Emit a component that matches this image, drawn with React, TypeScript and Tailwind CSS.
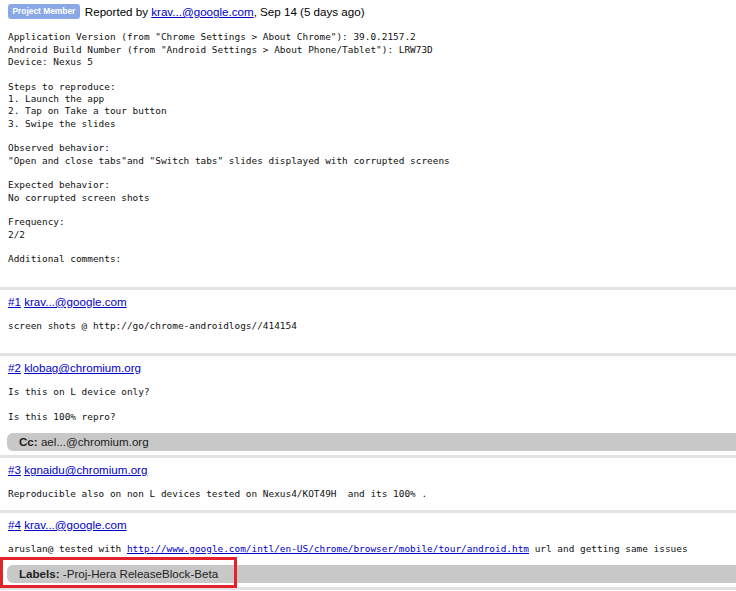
import type { ReactNode } from 'react';

const mono = "font-['DejaVu_Sans_Mono',monospace] text-[9.42px] leading-[12.33px] text-[#111] whitespace-pre m-0";

interface CommentProps {
  num: number;
  author: string;
  children: ReactNode;
  update?: ReactNode;
  highlight?: boolean;
}

function Comment({ num, author, children, update, highlight }: CommentProps) {
  return (
    <div className={`relative border-t-[3px] border-[#e2e2e2] pt-1 pl-2 ${update ? 'pb-[4px]' : 'pb-[9px]'}`}>
      {/* author line */}
      <div className="h-4 leading-4 text-[11.6px]">
        <a className="text-[#0000cc] underline">#{num}</a>{' '}
        <a className="text-[#0000cc] underline">{author}</a>
      </div>
      <pre className={`mt-[10px] ${mono}`}>{children}</pre>
      {update && (
        <div className="mt-[10px] -ml-px h-[18px] leading-[18px] rounded-l-[6px] bg-[#c8c8c8] pl-3 text-[11.6px] text-[#222]">
          {update}
        </div>
      )}
      {highlight && (
        <div className="absolute left-0 bottom-[-1px] w-[237px] h-[31px] border-[3px] border-[#e3222b]" />
      )}
    </div>
  );
}

export default function App() {
  return (
    <div className="w-[736px] h-[591px] overflow-hidden bg-white font-['Liberation_Sans',Arial,sans-serif] text-black">
      {/* Issue description */}
      <div className="pl-2 pt-1 pb-[21px]">
        <div className="flex items-center h-[15px] gap-[5px]">
          <span className="h-[15px] px-[4.5px] rounded-[3px] bg-[#8aa8e8] text-white font-bold text-[8.4px] leading-[15px]">
            Project Member
          </span>
          <span className="text-[11.6px] leading-[15px]">
            Reported by <a className="text-[#0000cc] underline">krav...@google.com</a>, Sep 14 (5 days ago)
          </span>
        </div>
        <pre className={`mt-[12.3px] ${mono}`}>
{`Application Version (from "Chrome Settings > About Chrome"): 39.0.2157.2
Android Build Number (from "Android Settings > About Phone/Tablet"): LRW73D
Device: Nexus 5

Steps to reproduce:
1. Launch the app
2. Tap on Take a tour button
3. Swipe the slides

Observed behavior:
"Open and close tabs"and "Switch tabs" slides displayed with corrupted screens

Expected behavior:
No corrupted screen shots

Frequency:
2/2

Additional comments:`}
        </pre>
      </div>

      <Comment num={1} author="krav...@google.com">
        {'screen shots @ http://go/chrome-androidlogs//414154\n\u00a0'}
      </Comment>

      <Comment
        num={2}
        author="klobag@chromium.org"
        update={<><b>Cc:</b> ael...@chromium.org</>}
      >
{`Is this on L device only?

Is this 100% repro?`}
      </Comment>

      <Comment num={3} author="kgnaidu@chromium.org">
        {'Reproducible also on non L devices tested on Nexus4/KOT49H  and its 100% .'}
      </Comment>

      <Comment
        num={4}
        author="krav...@google.com"
        update={<><b>Labels:</b> -Proj-Hera ReleaseBlock-Beta</>}
        highlight
      >
        {'aruslan@ tested with '}
        <a className="text-[#0000cc] underline">http://www.google.com/intl/en-US/chrome/browser/mobile/tour/android.htm</a>
        {' url and getting same issues'}
      </Comment>

      <div className="border-t-[3px] border-[#e2e2e2]" />
    </div>
  );
}
